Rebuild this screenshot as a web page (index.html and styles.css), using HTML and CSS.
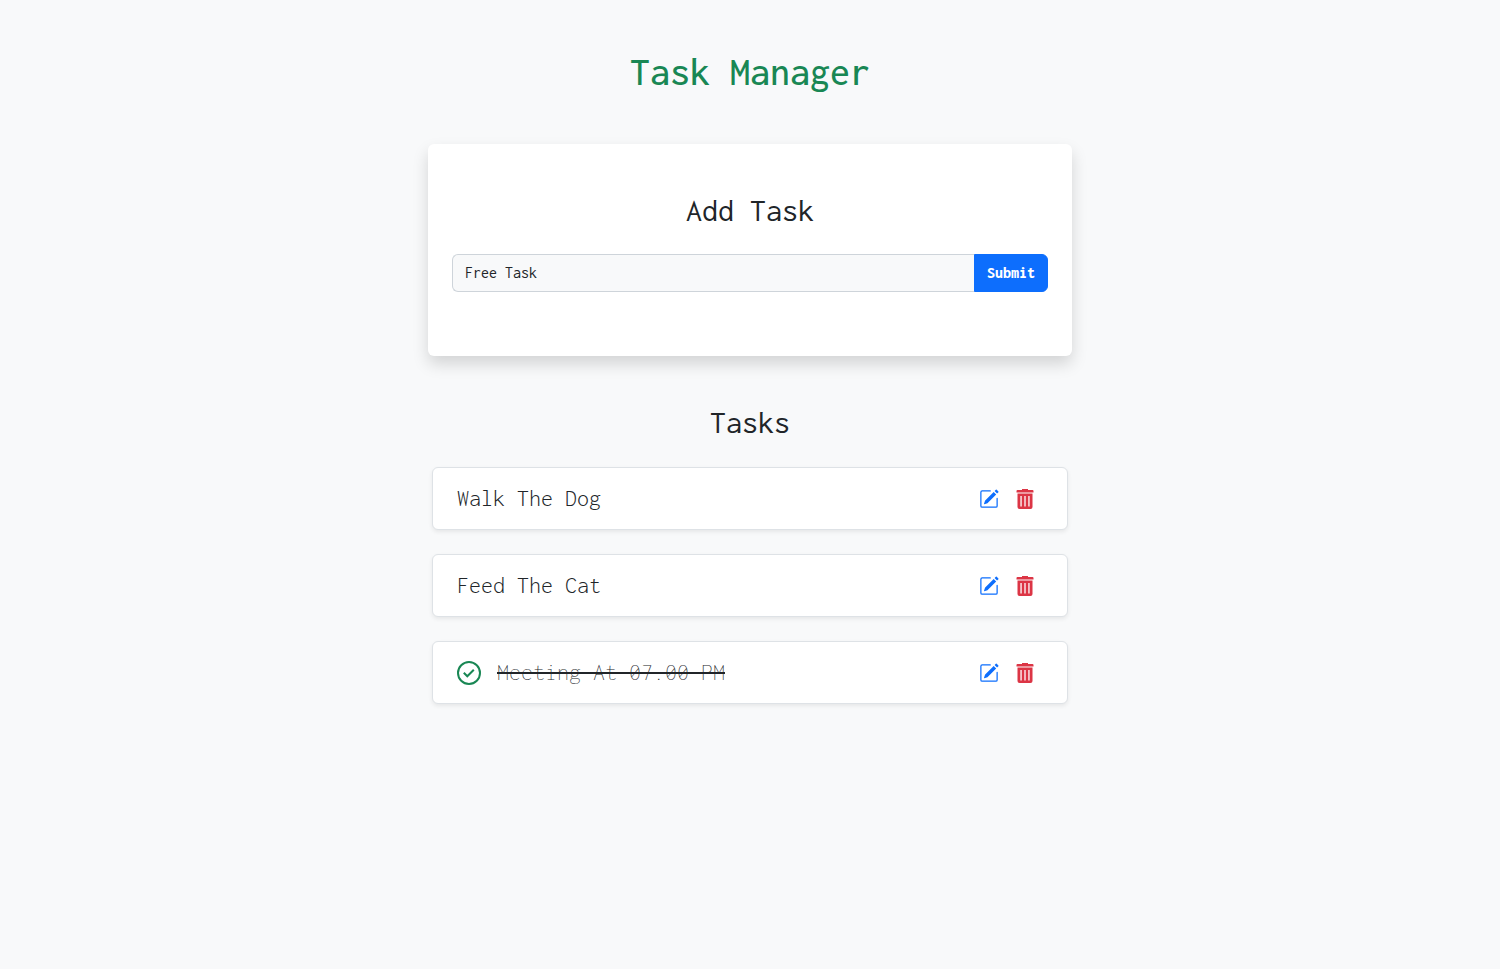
FILE: index.html
```html
<!DOCTYPE html>
<html lang="en">
<head>
<meta charset="utf-8">
<meta name="viewport" content="width=device-width, initial-scale=1">
<title>Task Manager</title>
<link rel="stylesheet" href="styles.css">
</head>
<body>
<svg class="sprite" aria-hidden="true">
  <symbol id="edit" viewBox="0 0 16 16"><path fill="currentColor" d="M15.502 1.94a.5.5 0 0 1 0 .706L14.459 3.69l-2-2L13.502.646a.5.5 0 0 1 .707 0l1.293 1.293zm-1.75 2.456-2-2L4.939 9.21a.5.5 0 0 0-.121.196l-.805 2.414a.25.25 0 0 0 .316.316l2.414-.805a.5.5 0 0 0 .196-.12l6.813-6.814z"/><path fill="currentColor" fill-rule="evenodd" d="M1 13.5A1.5 1.5 0 0 0 2.5 15h11a1.5 1.5 0 0 0 1.5-1.5v-6a.5.5 0 0 0-1 0v6a.5.5 0 0 1-.5.5h-11a.5.5 0 0 1-.5-.5v-11a.5.5 0 0 1 .5-.5H9a.5.5 0 0 0 0-1H2.500A1.5 1.5 0 0 0 1 2.500z"/></symbol>
  <symbol id="trash" viewBox="0 0 20 20"><path fill="currentColor" d="M7 0h6v1h4.500a1 1 0 0 1 1 1v1.600H1.500V2a1 1 0 0 1 1-1H7z"/><path fill="currentColor" fill-rule="evenodd" d="M2.500 4.600h15v13.400a2 2 0 0 1-2 2h-11a2 2 0 0 1-2-2zM5.400 7v10.500h1.300V7zM9.350 7v10.500h1.300V7zM13.300 7v10.500h1.300V7z"/></symbol>
</svg>
<main class="page">
  <h1 class="title">Task Manager</h1>
  <form class="add-card">
    <h2 class="heading"><label for="task">Add Task</label></h2>
    <div class="input-group">
      <input class="task-input" id="task" type="text" value="Free Task">
      <button class="submit" type="button">Submit</button>
    </div>
  </form>
  <section class="tasks">
    <h2 class="heading">Tasks</h2>
    <ul class="task-list">
      <li class="task">
        <span class="task-name">Walk The Dog</span>
        <button class="icon-button edit" type="button" aria-label="Edit"><svg class="icon"><use href="#edit"/></svg></button>
        <button class="icon-button delete" type="button" aria-label="Delete"><svg class="icon"><use href="#trash"/></svg></button>
      </li>
      <li class="task">
        <span class="task-name">Feed The Cat</span>
        <button class="icon-button edit" type="button" aria-label="Edit"><svg class="icon"><use href="#edit"/></svg></button>
        <button class="icon-button delete" type="button" aria-label="Delete"><svg class="icon"><use href="#trash"/></svg></button>
      </li>
      <li class="task">
        <svg class="check" viewBox="0 0 24 24" aria-hidden="true"><circle cx="12" cy="12" r="11"/><path d="m6.800 11.800 3.500 3.500 6.500-6.500"/></svg>
        <s class="task-name done">Meeting At 07.00 PM</s>
        <button class="icon-button edit" type="button" aria-label="Edit"><svg class="icon"><use href="#edit"/></svg></button>
        <button class="icon-button delete" type="button" aria-label="Delete"><svg class="icon"><use href="#trash"/></svg></button>
      </li>
    </ul>
  </section>
</main>
</body>
</html>
```
FILE: styles.css
```css
* { box-sizing: border-box; }
body {
  margin: 0;
  background: #f8f9fa;
  color: #212529;
  font-family: Inconsolata, "Liberation Mono", monospace;
  font-size: 16px;
  line-height: 24px;
}
button, input { font: inherit; }
.sprite { position: absolute; width: 0; height: 0; }
.page { max-width: 644px; margin: 0 auto; padding: 48px 0; }
.title {
  margin: 0 0 48px;
  color: #198754;
  font-size: 40px;
  font-weight: 450;
  line-height: 48px;
  text-align: center;
}
.add-card {
  padding: 48px 24px 64px;
  border-radius: 6px;
  background: #fff;
  box-shadow: 0 8px 16px rgba(0, 0, 0, .15);
}
.heading {
  margin: 0 0 24px;
  font-size: 32px;
  font-weight: 430;
  line-height: 38px;
  text-align: center;
}
.input-group { display: flex; }
.task-input {
  flex: 1;
  min-width: 0;
  height: 38px;
  padding: 5px 12px 7px;
  border: 1px solid #ced4da;
  border-right: 0;
  border-radius: 6px 0 0 6px;
  background: #f8f9fa;
  color: #212529;
  font-weight: 400;
}
.submit {
  padding: 6px 12px;
  border: 1px solid #0d6efd;
  border-radius: 0 6px 6px 0;
  background: #0d6efd;
  color: #fff;
  font-weight: 800;
}
.tasks { padding: 48px 4px 0; }
.task-list {
  display: grid;
  gap: 24px;
  margin: 0;
  padding: 1px 0 0;
  list-style: none;
}
.task {
  display: flex;
  align-items: center;
  padding: 12px 32px 12px 24px;
  border: 1px solid #dee2e6;
  border-radius: 6px;
  background: #fff;
  box-shadow: 0 2px 4px rgba(0, 0, 0, .075);
}
.task-name { flex: 1; font-size: 24px; font-weight: 340; line-height: 37px; }
.done { flex: none; margin-right: auto; font-weight: 250; text-decoration-thickness: 2px; }
.check {
  width: 24px;
  height: 24px;
  margin-right: 16px;
  fill: none;
  stroke: #198754;
  stroke-width: 2;
}
.icon-button {
  display: flex;
  padding: 1px 0 0;
  border: 0;
  background: none;
  cursor: pointer;
}
.icon { width: 20px; height: 20px; }
.edit { margin-right: 16px; color: #0d6efd; }
.delete { color: #dc3545; }
```
